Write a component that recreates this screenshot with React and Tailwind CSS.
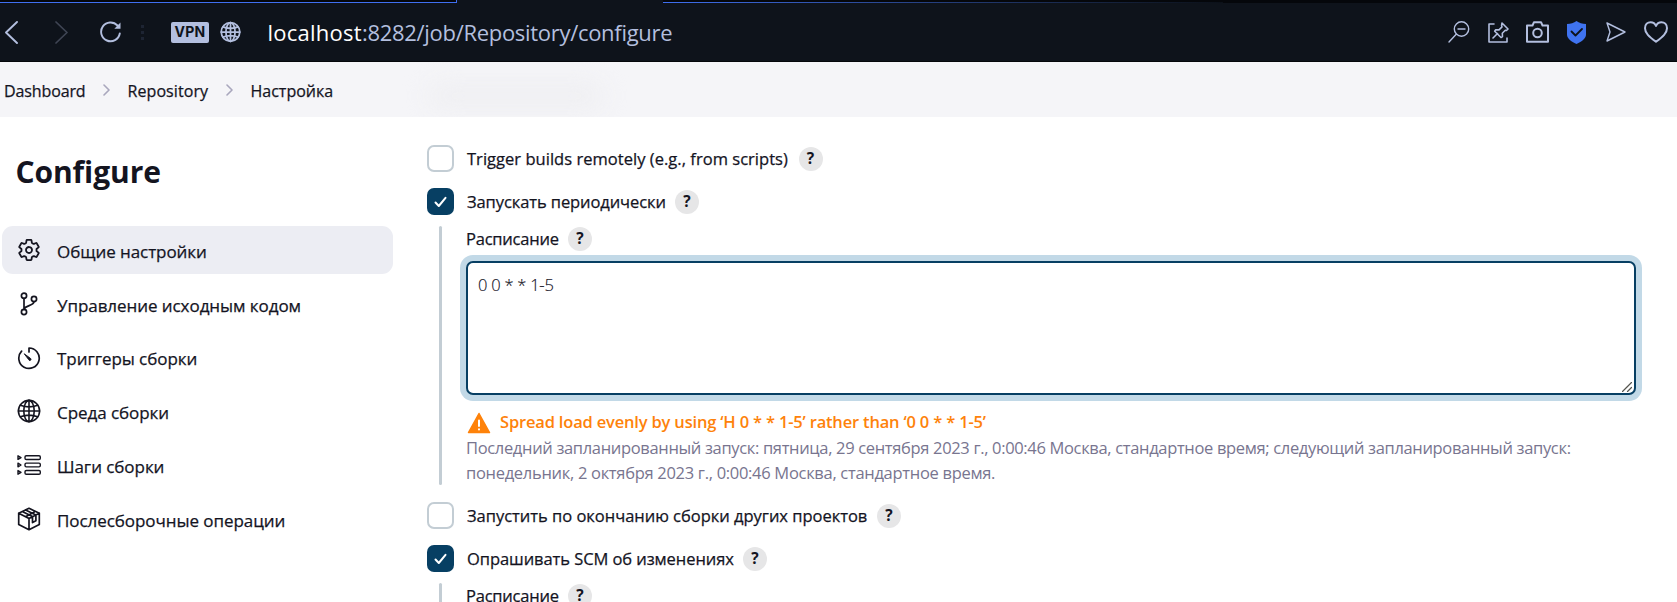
import React from "react";

function Svg({ className, children, box = "0 0 24 24", stroke = 1.5 }) {
  return (
    <svg
      className={`shrink-0 ${className}`}
      viewBox={box}
      fill="none"
      stroke="currentColor"
      strokeWidth={stroke}
      strokeLinecap="round"
      strokeLinejoin="round"
    >
      {children}
    </svg>
  );
}

const GlobeLines = () => (
  <>
    <circle cx="12" cy="12" r="10.6" />
    <ellipse cx="12" cy="12" rx="5.2" ry="10.6" />
    <path d="M12 1.4v21.2M1.4 12h21.2M3.4 6.2c5 2 12.200 2 17.200 0M3.400 17.800c5-2 12.200-2 17.200 0" />
  </>
);

function TabStrip() {
  return (
    <div className="flex h-[3px] w-full bg-[#05070b]">
      <div className="h-[3px] w-[457px] border-r border-b border-[#3f6ff0]" />
      <div className="h-[3px] w-[206px] bg-[#0e131b]" />
      <div className="flex h-[3px] flex-1 flex-col justify-end">
        <div className="h-px w-[560px] bg-linear-to-r from-[#3f6ff0] to-[#0b1018]" />
      </div>
    </div>
  );
}

function Toolbar() {
  return (
    <div className="flex h-[59px] items-center border-b border-[#05070b] bg-[#0e131b] text-[#b3bfdf]">
      <Svg className="ml-[5px] h-[23px] w-[13px]" box="0 0 13 23" stroke={1.9}>
        <path d="M12 1 1 11.500 12 22" />
      </Svg>
      <Svg className="ml-[37px] h-[23px] w-[13px] text-[#3f4554]" box="0 0 13 23" stroke={1.7}>
        <path d="M1 1l11 10.500L1 22" />
      </Svg>
      <Svg className="ml-[32px] h-[22px] w-[22px]" box="0 0 22 22" stroke={1.9}>
        <path d="M19.800 12.500A9.400 9.400 0 1 1 17.500 4.500" />
        <path d="M20.500 1.500v6.200h-6.200z" fill="currentColor" stroke="none" />
      </Svg>
      <div className="ml-[19px] flex flex-col gap-[3px]">
        <div className="size-[3px] bg-[#1d2433]" />
        <div className="size-[3px] bg-[#1d2433]" />
        <div className="size-[3px] bg-[#1d2433]" />
      </div>
      <div className="ml-[27px] flex h-[21px] w-[38px] items-center justify-center rounded-[2px] bg-[#b3bfdf] font-['Inter','Open_Sans'] text-[14px] leading-none font-bold tracking-[0.3px] text-[#0e131b]">
        VPN
      </div>
      <Svg className="ml-[11px] h-[22px] w-[21px]" stroke={2}>
        <GlobeLines />
      </Svg>
      <div className="ml-[26.500px] text-[22px] leading-[30px] whitespace-nowrap">
        <span className="tracking-[0.25px] text-white">localhost</span>
        <span className="tracking-[-0.3px]">:8282/job/Repository/configure</span>
      </div>
      <div className="ml-auto flex items-center">
        <Svg className="size-[22px]" box="0 0 22 22" stroke={1.4}>
          <circle cx="13.500" cy="8" r="7.200" />
          <path d="M10 8h7M8.200 13.200 1 21" />
        </Svg>
        <Svg className="ml-[18px] size-[21px]" box="0 0 21 21" stroke={1.6}>
          <path d="M6 2H1v18h18v-4" />
          <path d="M14 1l6 6-1.500 1.500-1.200-.3-3 3 .2 3.300-1.500 1-6.300-6.300 1-1.500 3.300.2 3-3-.4-1.400zM9.500 11.500 5 16" />
        </Svg>
        <Svg className="ml-[17px] h-[22px] w-[23px]" box="0 0 23 22" stroke={2}>
          <path d="M1 4.500h5.500l1.500-3.300h7l1.500 3.300H22V20.800H1z" />
          <circle cx="11.500" cy="12" r="4.300" />
        </Svg>
        <Svg className="ml-[18px] h-[23px] w-[19px]" box="0 0 19 23">
          <path d="M9.500 0C12 1.800 15.500 3 19 3v10.500c0 4-4 7-9.500 9.500C4 20.500 0 17.500 0 13.500V3c3.500 0 7-1.200 9.500-3z" fill="#3f73f0" stroke="none" />
          <path d="M4.500 10.500 8.500 14.500 15 8" stroke="#0e131b" strokeWidth="1.800" />
        </Svg>
        <Svg className="ml-[20px] h-[20px] w-[20px]" box="0 0 20 20" stroke={1.4}>
          <path d="M1 1l18 9L1 19l3-9z" />
        </Svg>
        <Svg className="mr-[9px] ml-[18px] h-[22px] w-[24px]" box="0 0 24 22" stroke={2}>
          <path d="M12 20.800C5 15.500 1 12 1 7.200 1 3.500 3.600 1.200 6.600 1.200c2.400 0 4.400 1.300 5.400 3.800 1-2.500 3-3.800 5.400-3.800 3 0 5.600 2.300 5.600 6 0 4.800-4 8.300-11 13.600z" />
        </Svg>
      </div>
    </div>
  );
}

const Crumb = () => (
  <Svg className="h-[12px] w-[7px] text-[#a9a7bd]" box="0 0 7 12" stroke={1.6}>
    <path d="M1 1l5 5-5 5" />
  </Svg>
);

function Breadcrumbs() {
  return (
    <div className="flex h-[55px] items-center overflow-hidden bg-[#f5f5f8] pl-[4px] text-[16px] leading-[22px] text-[#14141f] [-webkit-text-stroke:0.25px]">
      <span className="mt-[2px] w-[99px] tracking-[-0.12px]">Dashboard</span>
      <Crumb />
      <span className="mt-[2px] ml-[17.500px] w-[98px] tracking-[0.08px]">Repository</span>
      <Crumb />
      <span className="mt-[2px] ml-[18px] w-[98px]">Настройка</span>
      <div className="ml-[80px] h-[28px] w-[175px] translate-y-[6px] rounded-full bg-[#efeff2] blur-[12px]" />
    </div>
  );
}

const icons = {
  gear: (
    <Svg className="size-[24px]" box="0 0 512 512" stroke={38}>
      <path d="M262.290 192.310a64 64 0 1 0 57.400 57.400 64.130 64.130 0 0 0-57.400-57.400zM416.390 256a154.340 154.340 0 0 1-1.530 20.790l45.210 35.460a10.810 10.810 0 0 1 2.450 13.750l-42.770 74a10.810 10.810 0 0 1-13.140 4.590l-44.900-18.080a16.110 16.110 0 0 0-15.170 1.750A164.480 164.480 0 0 1 325 400.800a15.940 15.940 0 0 0-8.820 12.140l-6.730 47.890a11.080 11.080 0 0 1-10.680 9.170h-85.540a11.110 11.110 0 0 1-10.690-8.870l-6.720-47.820a16.070 16.070 0 0 0-9-12.220 155.300 155.300 0 0 1-21.460-12.570 16 16 0 0 0-15.110-1.710l-44.890 18.070a10.810 10.810 0 0 1-13.140-4.580l-42.770-74a10.800 10.800 0 0 1 2.450-13.750l38.210-30a16.050 16.050 0 0 0 6-14.080c-.36-4.170-.58-8.330-.58-12.500s.21-8.270.58-12.350a16 16 0 0 0-6.070-13.940l-38.190-30A10.810 10.810 0 0 1 49.480 186l42.770-74a10.810 10.810 0 0 1 13.140-4.590l44.900 18.080a16.110 16.110 0 0 0 15.170-1.750A164.480 164.480 0 0 1 187 111.200a15.940 15.940 0 0 0 8.820-12.140l6.730-47.890A11.080 11.080 0 0 1 213.230 42h85.540a11.110 11.110 0 0 1 10.690 8.870l6.720 47.820a16.070 16.070 0 0 0 9 12.220 155.300 155.300 0 0 1 21.460 12.570 16 16 0 0 0 15.110 1.710l44.890-18.070a10.810 10.810 0 0 1 13.140 4.580l42.770 74a10.800 10.800 0 0 1-2.450 13.750l-38.210 30a16.050 16.050 0 0 0-6.050 14.080c.33 4.140.55 8.300.55 12.470z" />
    </Svg>
  ),
  branch: (
    <Svg className="size-[24px]" stroke={1.7}>
      <circle cx="7" cy="3.800" r="2.600" />
      <circle cx="7" cy="20" r="2.600" />
      <circle cx="17" cy="7" r="2.600" />
      <path d="M7 6.400v11M17 9.600c0 4.400-8.500 3.500-10 7.500" />
    </Svg>
  ),
  timer: (
    <Svg className="size-[24px]" stroke={1.7}>
      <path d="M12 6V2a10.200 10.200 0 1 1-7.400 3.200" />
      <path d="M7.500 8l5.800 4.200a1.200 1.200 0 1 1-1.600 1.600z" fill="currentColor" strokeWidth="0.900" />
    </Svg>
  ),
  globe: (
    <Svg className="size-[24px]" stroke={1.600}>
      <GlobeLines />
    </Svg>
  ),
  steps: (
    <Svg className="size-[24px]" stroke={1.400}>
      <path d="M1 2.800v3.600l3-1.800zM1 10.200v3.600l3-1.800zM1 17.600v3.600l3-1.800z" />
      <rect x="8" y="2.700" width="15.300" height="3.800" rx="1.300" />
      <rect x="8" y="10.100" width="15.300" height="3.800" rx="1.300" />
      <rect x="8" y="17.500" width="15.300" height="3.800" rx="1.300" />
    </Svg>
  ),
  box: (
    <Svg className="size-[24px]" stroke={1.700}>
      <path d="M12 1.300 22.300 6.200v11.300L12 22.700 1.700 17.500V6.200zM1.700 6.200 12 11.400l10.300-5.200M12 11.400v11.300M5.200 4.600l10.300 5v6l3.400-1.800V8M8.600 3l10.300 5M8.500 9.700l8.500-4.400" />
    </Svg>
  ),
};

const nav = [
  ["gear", "Общие настройки"],
  ["branch", "Управление исходным кодом"],
  ["timer", "Триггеры сборки"],
  ["globe", "Среда сборки"],
  ["steps", "Шаги сборки"],
  ["box", "Послесборочные операции"],
];

function Sidebar() {
  return (
    <aside className="w-[393px] shrink-0 pl-[2px]">
      <h1 className="mt-[34px] ml-[13.500px] text-[30px] leading-[42px] font-bold tracking-[-0.1px]">Configure</h1>
      <nav className="mt-[33px] flex flex-col gap-[5.800px]">
        {nav.map(([icon, label], i) => (
          <a
            key={label}
            className={`flex h-[48px] items-center rounded-[11px] pl-[15px] text-[17px] leading-[24px] ${i === 0 ? "bg-[#ecedf3]" : ""}`}
          >
            {icons[icon]}
            <span className="mt-[3.800px] ml-[16px] tracking-[-0.06px] whitespace-nowrap [-webkit-text-stroke:0.25px]">
              {label}
            </span>
          </a>
        ))}
      </nav>
    </aside>
  );
}

const Help = () => (
  <span className="flex size-[24px] shrink-0 items-center justify-center rounded-full bg-[#e6e6e7] text-[15.500px] leading-none font-bold">
    ?
  </span>
);

function Option({ checked, label, className }) {
  return (
    <label className="flex h-[27px] items-center">
      {checked ? (
        <span className="flex size-[27px] items-center justify-center rounded-[7px] bg-[#073f63] text-white">
          <Svg className="h-[12px] w-[13px]" box="0 0 13 12" stroke={2}>
            <path d="M1.500 6.500 4.800 10 11.500 1.800" />
          </Svg>
        </span>
      ) : (
        <span className="size-[27px] rounded-[7px] border-2 border-[#c3cdd4] bg-white" />
      )}
      <span className={`mt-px ml-[13px] leading-[24px] whitespace-nowrap [-webkit-text-stroke:0.25px] ${className}`}>{label}</span>
      <Help />
    </label>
  );
}

function FieldLabel() {
  return (
    <div className="flex h-[24px] items-center">
      <span className="w-[102px] leading-[24px] tracking-[-0.22px] [-webkit-text-stroke:0.25px]">Расписание</span>
      <Help />
    </div>
  );
}

export default function App() {
  return (
    <div className="h-[602px] w-full overflow-hidden bg-white font-['Open_Sans','Noto_Sans',sans-serif] text-[#14141f]">
      <TabStrip />
      <Toolbar />
      <Breadcrumbs />
      <div className="flex">
        <Sidebar />
        <main className="ml-[34px] w-[1210px] pt-[28px] text-[16.500px]">
          <Option label="Trigger builds remotely (e.g., from scripts)" className="w-[331.500px] tracking-[0.03px]" />
          <div className="mt-[16px]">
            <Option checked label="Запускать периодически" className="w-[208px] tracking-[-0.09px]" />
          </div>
          <div className="mt-[11px] ml-[12px] flex">
            <div className="h-[259px] w-[3px] shrink-0 rounded-full bg-[#c3cdd4]" />
            <div className="ml-[24px] w-[1170px] pt-px">
              <FieldLabel />
              <div className="relative mt-[10px]">
                <textarea
                  className="block h-[134px] w-[1170px] resize-none rounded-[7px] border-2 border-[#073f63] bg-white px-[10px] py-[8px] leading-[27px] font-light tracking-[-0.25px] ring-[6px] ring-[#c2d9e7] outline-none [-webkit-text-stroke:0.15px]"
                  defaultValue="0 0 * * 1-5"
                />
                <Svg className="absolute right-[4px] bottom-[3px] size-[10px] text-[#55554f]" box="0 0 10 10" stroke={1.2}>
                  <path d="M.5 9.500 9.500.5M5.500 9.500l4-4" />
                </Svg>
              </div>
              <div className="mt-[14px] flex h-[27px] items-center text-[#fe820a]">
                <Svg className="ml-px h-[22px] w-[24px]" box="0 0 24 22">
                  <path d="M12 1.500 22.500 20.500h-21z" fill="currentColor" stroke="currentColor" />
                  <path d="M12 8.500v5.500M12 17.300v.2" stroke="white" strokeWidth="2" />
                </Svg>
                <span className="ml-[9px] font-semibold tracking-[-0.18px] whitespace-nowrap">
                  Spread load evenly by using ‘H 0 * * 1-5’ rather than ‘0 0 * * 1-5’
                </span>
              </div>
              <div className="-mt-px text-[16.500px] leading-[25px] whitespace-nowrap text-[#78758f]">
                <div className="tracking-[-0.335px]">
                  Последний запланированный запуск: пятница, 29 сентября 2023 г., 0:00:46 Москва, стандартное время; следующий запланированный запуск:
                </div>
                <div className="tracking-[-0.3px]">понедельник, 2 октября 2023 г., 0:00:46 Москва, стандартное время.</div>
              </div>
            </div>
          </div>
          <div className="mt-[17px]">
            <Option label="Запустить по окончанию сборки других проектов" className="w-[410px] tracking-[-0.02px]" />
          </div>
          <div className="mt-[16px]">
            <Option checked label="Опрашивать SCM об изменениях" className="w-[276px] tracking-[-0.07px]" />
          </div>
          <div className="mt-[11px] ml-[12px] flex">
            <div className="h-[259px] w-[3px] shrink-0 rounded-full bg-[#c3cdd4]" />
            <div className="ml-[24px] pt-px">
              <FieldLabel />
            </div>
          </div>
        </main>
      </div>
    </div>
  );
}
